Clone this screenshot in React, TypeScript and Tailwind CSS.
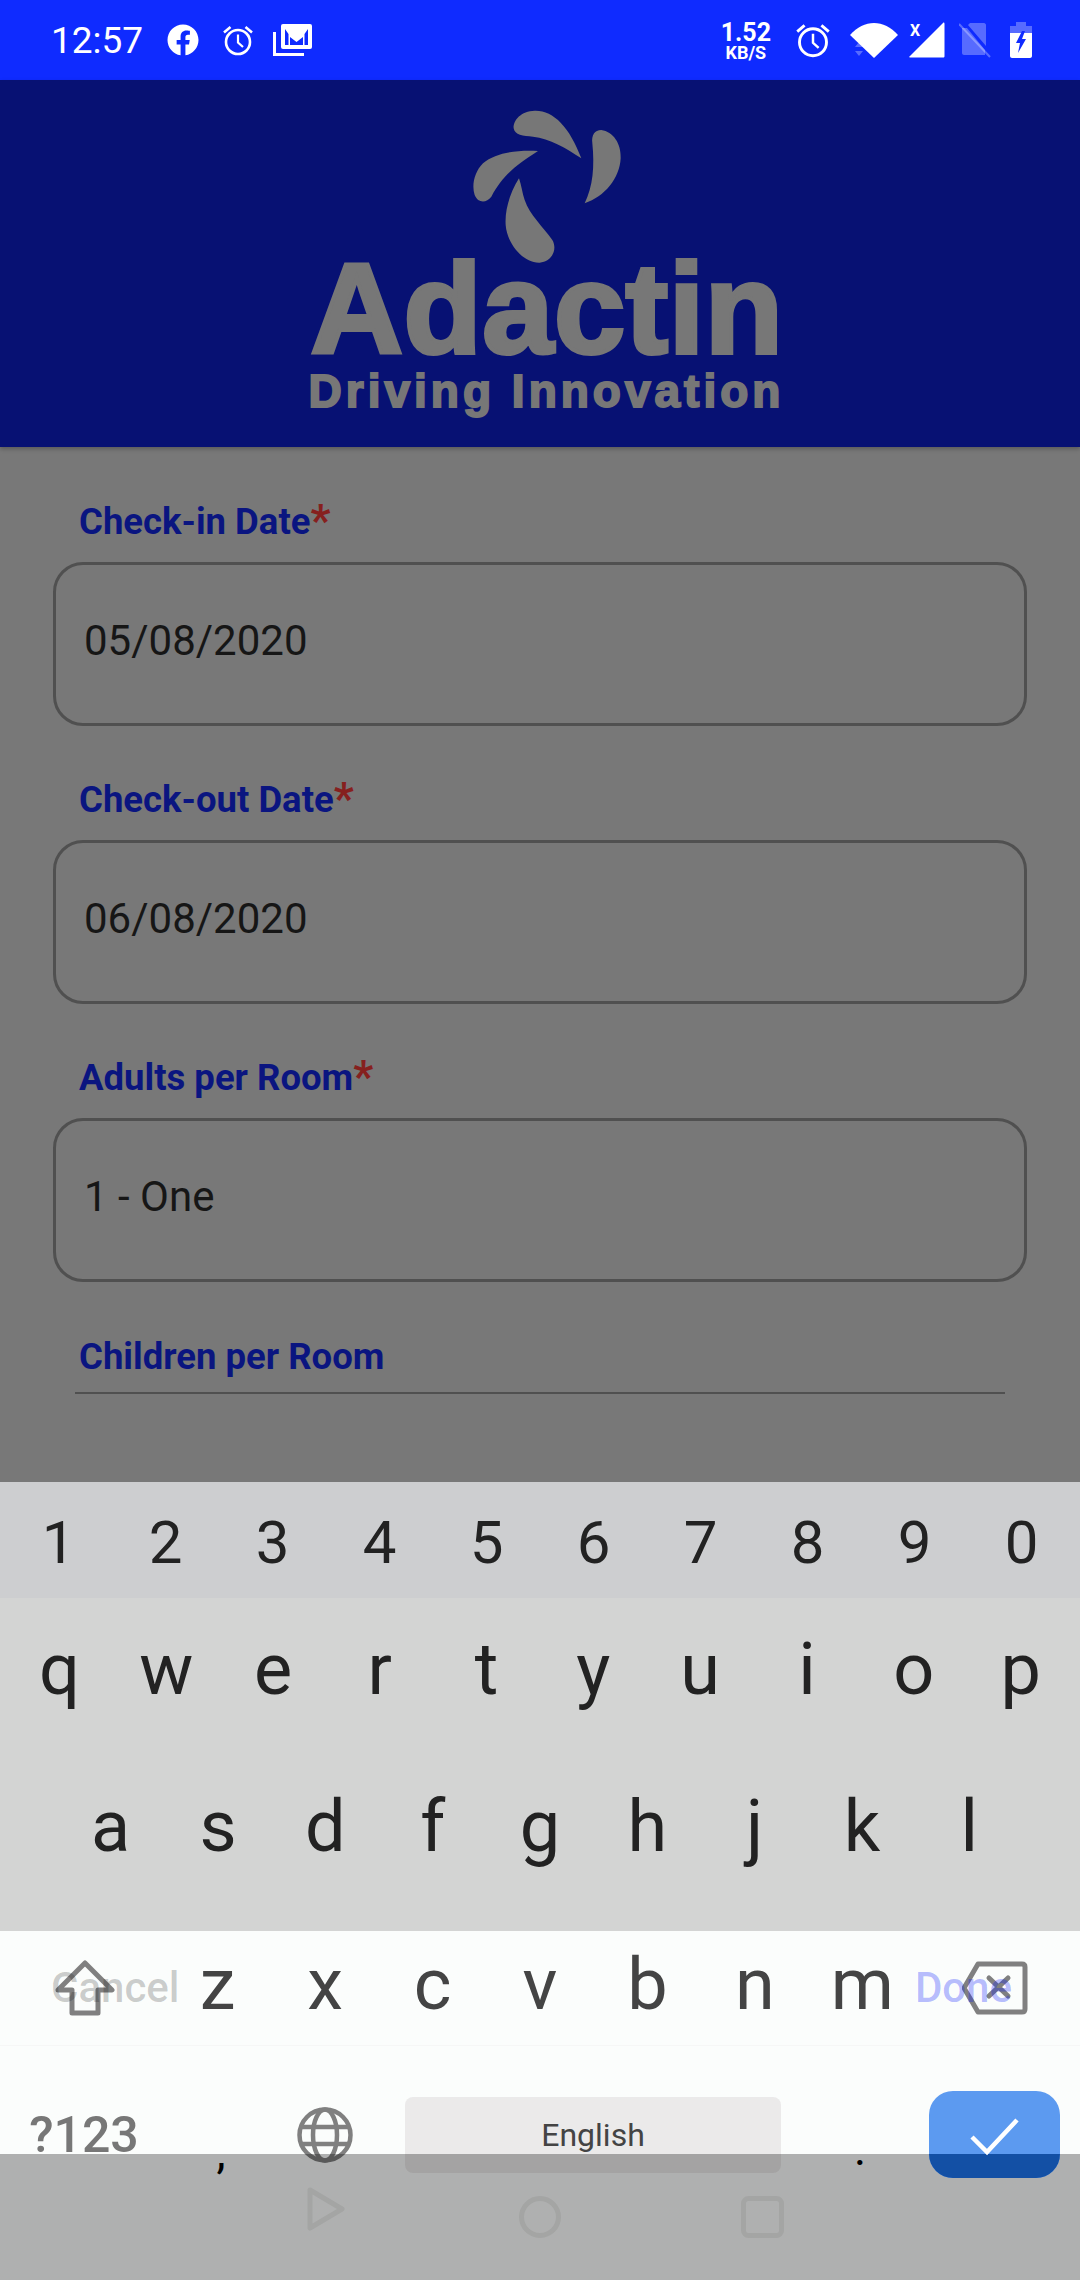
import { FaFacebook } from "react-icons/fa";

const digits = ["1", "2", "3", "4", "5", "6", "7", "8", "9", "0"];
const topRow = ["q", "w", "e", "r", "t", "y", "u", "i", "o", "p"];
const midRow = ["a", "s", "d", "f", "g", "h", "j", "k", "l"];
const lowRow = ["z", "x", "c", "v", "b", "n", "m"];

function AlarmIcon({ className }: { className: string }) {
  return (
    <svg viewBox="0 0 32 32" className={className} fill="none" stroke="white" strokeWidth="2.6">
      <circle cx="16" cy="18" r="12" />
      <path d="M16 10.5V18.5L21 23" strokeWidth="2.2" />
      <path d="M2 8.5L8.5 3M30 8.5L23.5 3" strokeWidth="2.6" />
    </svg>
  );
}

function GmailIcon() {
  return (
    <svg viewBox="0 0 40 32" className="ml-[19px] h-[32px] w-[40px]">
      <path d="M1.5 8V30.5H31" fill="none" stroke="white" strokeWidth="3" />
      <rect x="8" y="0" width="31" height="25" rx="2" fill="white" />
      <path d="M12 5V21H15.5V10Z M35 5V21H31.5V10Z M17 21H30V13L23.5 18L17 13Z" fill="#0f2bff" />
    </svg>
  );
}

function StatusBar() {
  return (
    <div className="flex h-[80px] items-center justify-between bg-[#0f2bff] pl-[51px] pr-[48px] text-white">
      <div className="flex items-center">
        <span className="text-[37px] leading-none">12:57</span>
        <FaFacebook className="ml-[24px] h-[32px] w-[32px]" />
        <AlarmIcon className="ml-[23px] h-[32px] w-[32px]" />
        <GmailIcon />
      </div>
      <div className="flex items-center">
        <div className="flex flex-col items-center font-bold">
          <span className="text-[25px] leading-[24px]">1.52</span>
          <span className="text-[18px] leading-[15px]">KB/S</span>
        </div>
        <AlarmIcon className="ml-[24px] h-[36px] w-[36px]" />
        <svg viewBox="0 0 48 36" className="ml-[19px] h-[36px] w-[48px]">
          <path d="M0 13C14 -3 34 -3 48 13L24 36Z" fill="white" />
          <path d="M5 25L9 20L13 25ZM5 29H13L9 34Z" fill="white" fillOpacity="0.3" />
        </svg>
        <svg viewBox="0 0 36 36" className="ml-[11px] h-[36px] w-[36px]">
          <path d="M0 35L34 1C35 0 35.500 1 35.500 2V34C35.500 35 35 35.500 34 35.500H1Z" fill="white" />
          <text x="1" y="14" fontSize="16" fontWeight="700" fill="white" fontFamily="Roboto, sans-serif">X</text>
        </svg>
        <svg viewBox="0 0 32 36" className="ml-[14px] h-[36px] w-[32px]">
          <path d="M3 6H8L26 28V33H5C4 33 3 32 3 31ZM11 1H25C26 1 27 2 27 3V24L9 3Z" fill="white" fillOpacity="0.3" />
          <path d="M0 2L31 35" stroke="white" strokeOpacity="0.3" strokeWidth="2" />
        </svg>
        <svg viewBox="0 0 22 36" className="ml-[19px] h-[36px] w-[22px]">
          <path d="M6 0H16V4H22V11H0V4H6Z" fill="white" fillOpacity="0.3" />
          <path d="M0 11H22V34C22 35 21 36 20 36H2C1 36 0 35 0 34Z" fill="white" />
          <path d="M12 9L6 21H10L8 31L16 17H12L15 9Z" fill="#0f2bff" />
        </svg>
      </div>
    </div>
  );
}

function LogoMark() {
  return (
    <svg viewBox="550 30 450 465" className="h-[155px] w-[150px]" fill="#777777">
      <path d="M875 175C840 80 790 30 735 32C695 33 670 60 672 85C675 105 700 108 730 110C780 115 830 145 875 175Z" />
      <path d="M885 310C910 260 915 200 908 130C905 105 915 90 935 90C970 95 995 130 993 175C990 235 945 290 885 310Z" />
      <path d="M745 153C690 150 620 155 580 190C555 215 545 255 555 285C565 310 590 310 605 290C640 225 680 195 745 153Z" />
      <path d="M688 235C660 280 645 330 648 375C652 430 700 490 750 488C785 485 805 450 788 420C760 380 720 345 705 300C698 280 695 255 688 235Z" />
    </svg>
  );
}

function Header() {
  return (
    <div className="relative z-10 flex h-[367px] flex-col items-center bg-[#071173] pt-[30px] font-['Liberation_Sans',sans-serif] font-bold text-[#777777] shadow-[0_2px_4px_rgba(0,0,0,0.25)]">
      <div className="ml-[16px]">
        <LogoMark />
      </div>
      <div className="mt-[-18px] ml-[14px] text-[128px] leading-[124px] tracking-[0.5px] [-webkit-text-stroke:4px_#777777]">Adactin</div>
      <div className="ml-[13px] mt-[-4px] text-[46px] leading-[48px] tracking-[4px] [-webkit-text-stroke:2px_#777777]">Driving Innovation</div>
    </div>
  );
}

function Field({ label, value }: { label: string; value: string }) {
  return (
    <div>
      <div className="flex h-[48px] items-center pl-[26px] pt-[2px] text-[36.500px] font-bold text-[#0a1580]">
        {label}
        <span className="-mt-[3px] text-[44px] leading-none font-bold text-[#86201e]">*</span>
      </div>
      <div className="mt-[17px] flex h-[164px] items-center rounded-[30px] border-[3px] border-[#505050] pb-[8px] pl-[28px] text-[42px] text-[#161616]">
        {value}
      </div>
    </div>
  );
}

function Form() {
  return (
    <div className="flex h-[1035px] flex-col gap-[49px] overflow-hidden px-[53px] pt-[50px]">
      <Field label="Check-in Date" value="05/08/2020" />
      <Field label="Check-out Date" value="06/08/2020" />
      <Field label="Adults per Room" value="1 - One" />
      <div>
        <div className="flex h-[48px] items-center pl-[26px] pt-[5px] text-[36.500px] font-bold text-[#0a1580]">Children per Room</div>
        <div className="ml-[22px] mt-[13px] h-[2px] w-[930px] bg-[#505050]" />
      </div>
    </div>
  );
}

function ShiftIcon() {
  return (
    <svg viewBox="0 0 60 56" className="ml-[6px] h-[56px] w-[60px]" fill="none" stroke="#808080" strokeWidth="5" strokeLinejoin="round">
      <path d="M30 3L57 30H43V53H17V30H3Z" />
    </svg>
  );
}

function BackspaceIcon() {
  return (
    <svg viewBox="0 0 66 54" className="mr-[6px] h-[54px] w-[66px]" fill="none" stroke="#808080" strokeWidth="5" strokeLinejoin="round">
      <path d="M16 3H60C62 3 63 4 63 6V48C63 50 62 51 60 51H16L2 27Z" />
      <path d="M27 17L46 35M46 17L27 35" strokeLinecap="round" />
    </svg>
  );
}

function GlobeIcon() {
  return (
    <svg viewBox="0 0 56 56" className="h-[56px] w-[56px]" fill="none" stroke="#808080" strokeWidth="4.500">
      <circle cx="28" cy="28" r="25.500" />
      <ellipse cx="28" cy="28" rx="12" ry="25.500" />
      <path d="M3 20H53M3 37H53" />
    </svg>
  );
}

function Keyboard() {
  return (
    <div className="relative font-['Roboto',sans-serif]">
      <div className="grid h-[116px] grid-cols-10 items-center bg-[#cdced0] px-[5px] pt-[5px] text-center text-[60px] leading-none text-[#222222]">
        {digits.map((d) => (
          <span key={d}>{d}</span>
        ))}
      </div>
      <div className="h-[333px] bg-[#d3d4d3] text-[72px] leading-none text-[#222222]">
        <div className="grid h-[150px] grid-cols-10 items-center px-[6px] pb-[6px] text-center">
          {topRow.map((k) => (
            <span key={k}>{k}</span>
          ))}
        </div>
        <div className="grid h-[151px] grid-cols-9 items-center px-[57px] pt-[6px] text-center">
          {midRow.map((k) => (
            <span key={k}>{k}</span>
          ))}
        </div>
      </div>
      <div className="relative h-[349px] bg-[#fbfdfc]">
        <div className="flex h-[115px] items-center border-b border-[#f6f7f6] text-[72px] leading-none text-[#444444]">
          <div className="flex w-[164px] justify-center">
            <ShiftIcon />
          </div>
          <div className="grid flex-1 grid-cols-7 pb-[6px] text-center">
            {lowRow.map((k) => (
              <span key={k}>{k}</span>
            ))}
          </div>
          <div className="flex w-[164px] justify-center">
            <BackspaceIcon />
          </div>
        </div>
        <div className="flex h-[177px] items-center">
          <div className="w-[168px] text-center text-[50px] font-medium leading-none text-[#777777]">?123</div>
          <div className="w-[102px] pl-[4px] pt-[34px] text-center text-[46px] leading-none text-black">,</div>
          <div className="flex w-[110px] justify-center">
            <GlobeIcon />
          </div>
          <div className="ml-[25px] flex h-[76px] w-[376px] items-center justify-center rounded-[8px] bg-[#ebeaea] text-[32px] text-[#444444]">
            English
          </div>
          <div className="w-[148px] pl-[10px] pt-[28px] text-center text-[46px] leading-none text-black">.</div>
          <div className="relative z-20 h-[87px] w-[131px] overflow-hidden rounded-[24px] bg-[#5c9af0]">
            <div className="absolute inset-x-0 bottom-0 h-[24px] bg-[#1350a5]" />
            <svg viewBox="0 0 131 87" className="absolute inset-0 h-[87px] w-[131px]" fill="none" stroke="white" strokeWidth="4.500">
              <path d="M43 46L58 61L88 29" />
            </svg>
          </div>
        </div>
        {/* the picker's own buttons show through the translucent keyboard */}
        <div className="absolute inset-x-0 top-[34px] flex justify-between pl-[51px] pr-[68px] text-[42px] font-medium leading-[46px]">
          <span className="text-black/20">Cancel</span>
          <span className="text-[#0a1aff]/30">Done</span>
        </div>
      </div>
    </div>
  );
}

function NavOverlay() {
  return (
    <div className="absolute inset-x-0 bottom-0 z-10 flex h-[126px] items-start bg-black/30 pl-[307px]">
      <svg viewBox="0 0 38 44" className="mt-[33px] h-[44px] w-[38px]" fill="none" stroke="#a4a5a4" strokeWidth="5" strokeLinejoin="round">
        <path d="M3 3L35 22L3 41Z" />
      </svg>
      <svg viewBox="0 0 42 42" className="ml-[174px] mt-[42px] h-[42px] w-[42px]" fill="none" stroke="#a4a5a4" strokeWidth="5">
        <circle cx="21" cy="21" r="18.500" />
      </svg>
      <svg viewBox="0 0 43 42" className="ml-[180px] mt-[42px] h-[42px] w-[43px]" fill="none" stroke="#a4a5a4" strokeWidth="5">
        <rect x="2.500" y="2.500" width="38" height="37" rx="5" />
      </svg>
    </div>
  );
}

export default function App() {
  return (
    <div className="relative h-[2280px] w-[1080px] overflow-hidden bg-[#787878] font-['Roboto',sans-serif]">
      <StatusBar />
      <Header />
      <Form />
      <Keyboard />
      <NavOverlay />
    </div>
  );
}
